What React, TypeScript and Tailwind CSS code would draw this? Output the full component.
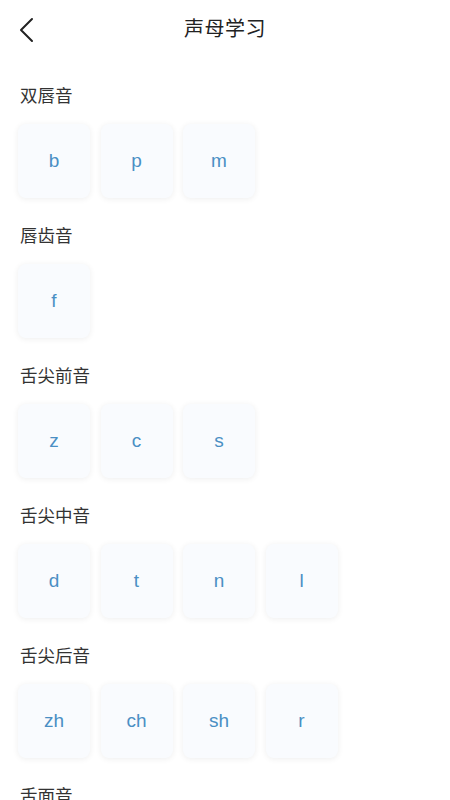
import React from "react";

const sections: { title: string; items: string[] }[] = [
  { title: "双唇音", items: ["b", "p", "m"] },
  { title: "唇齿音", items: ["f"] },
  { title: "舌尖前音", items: ["z", "c", "s"] },
  { title: "舌尖中音", items: ["d", "t", "n", "l"] },
  { title: "舌尖后音", items: ["zh", "ch", "sh", "r"] },
  { title: "舌面音", items: ["j", "q", "x"] },
];

export default function App() {
  return (
    <div
      className="w-[450px] h-[800px] overflow-hidden bg-white"
      style={{ fontFamily: '"Noto Sans", "Noto Sans CJK SC", sans-serif' }}
    >
      <div className="relative h-[58px] flex items-center justify-center">
        <svg
          className="absolute left-[18px] top-[17px]"
          width="18"
          height="26"
          viewBox="0 0 18 26"
          fill="none"
        >
          <path d="M14 2 L3 13 L14 24" stroke="#222" strokeWidth="2" strokeLinecap="round" strokeLinejoin="round" />
        </svg>
        <span className="text-[20px] leading-none text-[#222] tracking-[0.5px]">声母学习</span>
      </div>
      <div className="pl-[18px] pt-[25px]">
        {sections.map((s) => (
          <div key={s.title} className="mb-[25px]">
            <div className="text-[17.5px] leading-[24px] text-[#333] pl-[2px]">{s.title}</div>
            <div className="mt-[17px] flex gap-[10.5px]">
              {s.items.map((it) => (
                <div
                  key={it}
                  className="w-[72px] h-[74px] rounded-[8px] bg-[#f9fbfe] shadow-[0_1px_6px_rgba(0,0,0,0.07)] flex items-center justify-center text-[19px] text-[#4a8fc4]"
                  style={{ fontFamily: '"Liberation Sans", Arial, sans-serif' }}
                >
                  {it}
                </div>
              ))}
            </div>
          </div>
        ))}
      </div>
    </div>
  );
}
